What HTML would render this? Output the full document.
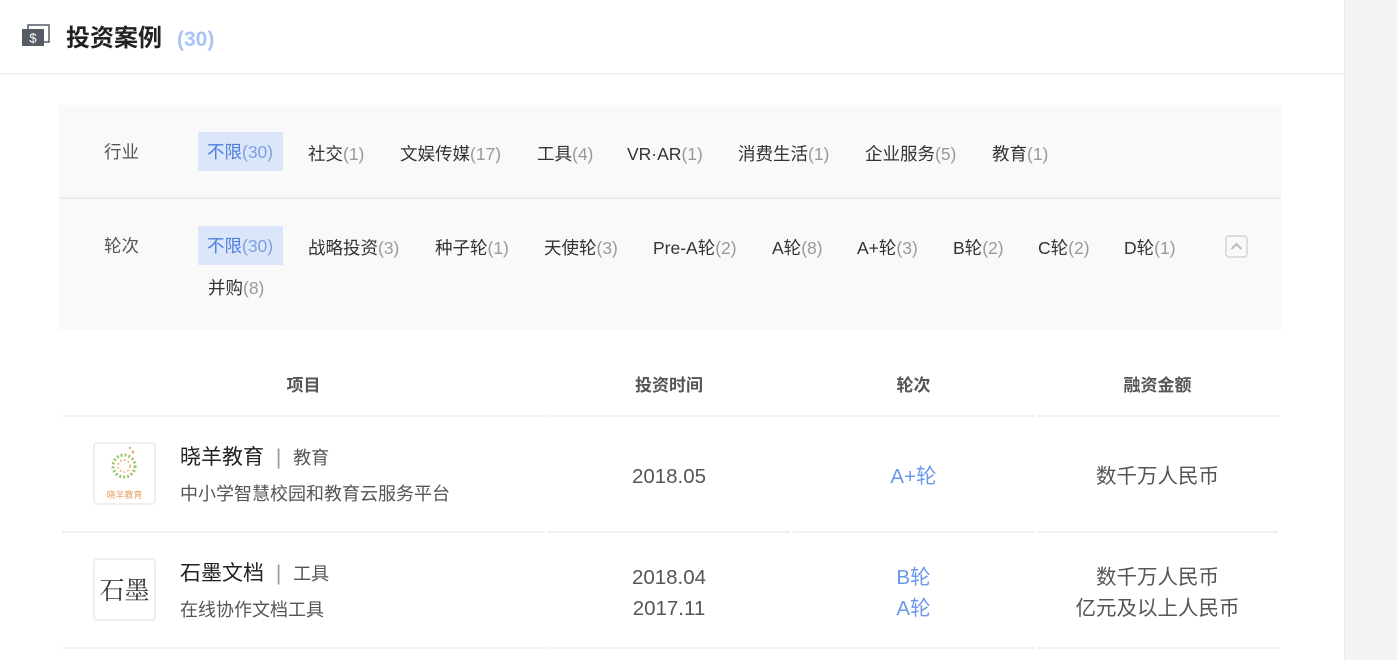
<!DOCTYPE html><html><head><meta charset="utf-8"><style>
*{margin:0;padding:0;box-sizing:border-box}
body{width:1397px;height:660px;overflow:hidden;background:#fff;font-family:"Liberation Sans","Noto Sans CJK SC",sans-serif;position:relative;color:#333}
.a{position:absolute;white-space:nowrap}
.t{font-size:17.5px;color:#333;line-height:22px}
.t i{font-style:normal;color:#999}
.sel{color:#4d7fdc;background:#dbe6fa;padding:9px 10px 8px 9px;}
.sel i{color:#7fa0e0}
.hd{font-size:17px;font-weight:bold;color:#555}
.line{position:absolute;height:2px;background:#f0f0f0}
.c{text-align:center;font-size:20.5px;color:#555}
</style></head><body>
<div class="a" style="left:1344px;top:0;width:53px;height:660px;background:#f2f3f5;border-left:1px solid #e8e8ea"></div>
<svg class="a" style="left:22px;top:24px" width="28" height="24" viewBox="0 0 28 24"><rect x="6" y="1" width="21" height="17" fill="none" stroke="#555c66" stroke-width="1.5"/><rect x="0" y="5" width="22" height="17" fill="#555c66"/><text x="11" y="18.5" font-size="13" fill="#fff" text-anchor="middle" font-family="Liberation Sans">$</text></svg>
<div class="a" style="left:66px;top:23px;font-size:24px;font-weight:bold;color:#222;line-height:32px">投资案例</div>
<div class="a" style="left:177px;top:25px;font-size:21px;font-weight:bold;color:#a8c4f8;line-height:30px">(30)</div>
<div class="a" style="left:0;top:73px;width:1344px;height:2px;background:#f2f2f2"></div>
<div class="a" style="left:59px;top:105px;width:1222px;height:225px;background:#f9f9f9"></div>
<div class="a" style="left:59px;top:197px;width:1222px;height:2px;background:#ececec"></div>
<div class="a t" style="left:104px;top:141px;color:#555">行业</div>
<div class="a t sel" style="left:198px;top:132px">不限<i>(30)</i></div>
<div class="a t" style="left:308px;top:143px">社交<i>(1)</i></div>
<div class="a t" style="left:400px;top:143px">文娱传媒<i>(17)</i></div>
<div class="a t" style="left:537px;top:143px">工具<i>(4)</i></div>
<div class="a t" style="left:627px;top:143px">VR·AR<i>(1)</i></div>
<div class="a t" style="left:738px;top:143px">消费生活<i>(1)</i></div>
<div class="a t" style="left:865px;top:143px">企业服务<i>(5)</i></div>
<div class="a t" style="left:992px;top:143px">教育<i>(1)</i></div>
<div class="a t" style="left:104px;top:235px;color:#555">轮次</div>
<div class="a t sel" style="left:198px;top:226px">不限<i>(30)</i></div>
<div class="a t" style="left:308px;top:237px">战略投资<i>(3)</i></div>
<div class="a t" style="left:435px;top:237px">种子轮<i>(1)</i></div>
<div class="a t" style="left:544px;top:237px">天使轮<i>(3)</i></div>
<div class="a t" style="left:653px;top:237px">Pre-A轮<i>(2)</i></div>
<div class="a t" style="left:772px;top:237px">A轮<i>(8)</i></div>
<div class="a t" style="left:857px;top:237px">A+轮<i>(3)</i></div>
<div class="a t" style="left:953px;top:237px">B轮<i>(2)</i></div>
<div class="a t" style="left:1038px;top:237px">C轮<i>(2)</i></div>
<div class="a t" style="left:1124px;top:237px">D轮<i>(1)</i></div>
<div class="a t" style="left:208px;top:277px">并购<i>(8)</i></div>
<svg class="a" style="left:1225px;top:235px" width="23" height="23" viewBox="0 0 23 23"><rect x="1" y="1" width="21" height="21" rx="3" fill="none" stroke="#c8ccd4" stroke-width="1.2"/><path d="M6.5 14 L11.5 9 L16.5 14" fill="none" stroke="#bbb" stroke-width="2"/></svg>
<div class="a hd" style="left:62px;top:371px;width:483px;text-align:center">项目</div>
<div class="a hd" style="left:548px;top:371px;width:242px;text-align:center">投资时间</div>
<div class="a hd" style="left:793px;top:371px;width:241px;text-align:center">轮次</div>
<div class="a hd" style="left:1037px;top:371px;width:241px;text-align:center">融资金额</div>
<div class="line" style="left:62px;top:415px;width:483px"></div><div class="line" style="left:548px;top:415px;width:242px"></div><div class="line" style="left:793px;top:415px;width:241px"></div><div class="line" style="left:1037px;top:415px;width:241px"></div>
<div class="line" style="left:62px;top:531px;width:483px"></div><div class="line" style="left:548px;top:531px;width:242px"></div><div class="line" style="left:793px;top:531px;width:241px"></div><div class="line" style="left:1037px;top:531px;width:241px"></div>
<div class="line" style="left:62px;top:647px;width:483px"></div><div class="line" style="left:548px;top:647px;width:242px"></div><div class="line" style="left:793px;top:647px;width:241px"></div><div class="line" style="left:1037px;top:647px;width:241px"></div>
<div class="a" style="left:93px;top:442px;width:63px;height:63px;border:2px solid #eee;border-radius:4px;background:#fff">
<svg width="59" height="59" viewBox="0 0 59 59"><circle cx="29" cy="22" r="11" fill="none" stroke="#9bc46a" stroke-width="3" stroke-dasharray="2 2"/><circle cx="29" cy="22" r="6" fill="none" stroke="#e8b070" stroke-width="1.5" stroke-dasharray="2 2"/><circle cx="38" cy="8" r="1.5" fill="#e8b070"/><circle cx="35" cy="4" r="1.2" fill="#e8b070"/></svg>
<div class="a" style="left:0;top:44px;width:59px;text-align:center;font-size:9px;color:#e8a060">晓羊教育</div></div>
<div class="a" style="left:180px;top:444px;font-size:21px;color:#222;line-height:28px">晓羊教育 <span style="color:#999;margin:0 6px">|</span> <span style="font-size:18px;color:#555">教育</span></div>
<div class="a" style="left:180px;top:483px;font-size:18px;color:#555;line-height:22px">中小学智慧校园和教育云服务平台</div>
<div class="a c" style="left:548px;top:464px;width:242px;line-height:26px">2018.05</div>
<div class="a c" style="left:793px;top:464px;width:241px;line-height:26px;color:#6b98ea">A+轮</div>
<div class="a c" style="left:1037px;top:464px;width:241px;line-height:26px">数千万人民币</div>
<div class="a" style="left:93px;top:558px;width:63px;height:63px;border:2px solid #eee;border-radius:4px;background:#fff;font-family:'Noto Serif CJK SC',serif;font-size:25px;color:#333;text-align:center;line-height:59px">石墨</div>
<div class="a" style="left:180px;top:560px;font-size:21px;color:#222;line-height:28px">石墨文档 <span style="color:#999;margin:0 6px">|</span> <span style="font-size:18px;color:#555">工具</span></div>
<div class="a" style="left:180px;top:599px;font-size:18px;color:#555;line-height:22px">在线协作文档工具</div>
<div class="a c" style="left:548px;top:562px;width:242px;line-height:31px">2018.04<br>2017.11</div>
<div class="a c" style="left:793px;top:562px;width:241px;line-height:31px;color:#6b98ea">B轮<br>A轮</div>
<div class="a c" style="left:1037px;top:562px;width:241px;line-height:31px">数千万人民币<br>亿元及以上人民币</div>
</body></html>
